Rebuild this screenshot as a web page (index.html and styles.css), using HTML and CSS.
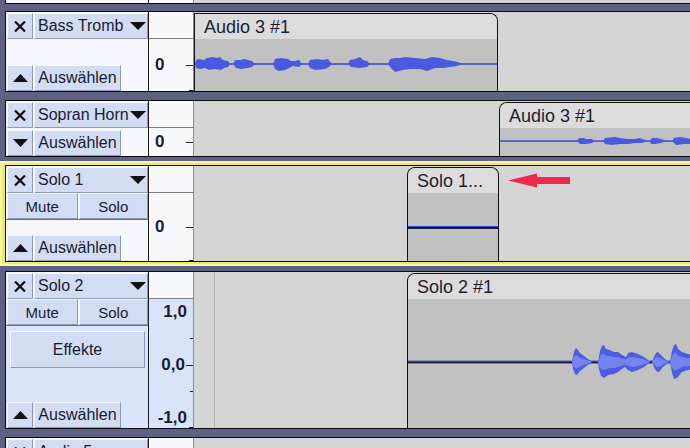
FILE: index.html
```html
<!DOCTYPE html>
<html>
<head>
<meta charset="utf-8">
<link rel="stylesheet" href="styles.css">
</head>
<body>
<div class="tracks">
  <div class="track stub">
    <div class="info"></div>
    <div class="ruler"></div>
    <div class="wave"></div>
  </div>

  <div class="track t1">
    <div class="info">
      <div class="row title-row">
        <div class="btn close"><svg width="12" height="11" viewBox="0 0 12 11"><path d="M1,0.5 L11,10.5 M11,0.5 L1,10.5" stroke="#111" stroke-width="2.2"/></svg></div>
        <div class="btn name"><span class="label">Bass Tromb</span><svg class="drop" width="16" height="8" viewBox="0 0 16 8"><path d="M0,0 L16,0 L8,8 Z" fill="#111"/></svg></div>
      </div>
      <div class="spacer"></div>
      <div class="row bottom-row">
        <div class="btn minimize"><svg width="15" height="8" viewBox="0 0 15 8"><path d="M0,8 L15,8 L7.5,0 Z" fill="#111"/></svg></div>
        <div class="btn select">Auswählen</div>
      </div>
    </div>
    <div class="ruler">
      <div class="corner"></div>
      <div class="scale"><span class="zero">0</span><span class="tick"></span><span class="end-tick"></span></div>
    </div>
    <div class="wave">
      <div class="clip clip-a">
        <div class="clip-head">Audio 3 #1</div>
        <div class="clip-body">
          <svg class="wf" width="302" height="52" viewBox="0 0 302 52">
            <rect x="0" y="24.2" width="302" height="1.6" fill="#3b4bd4"/>
            <g fill="#4a5ae0">
              <path d="M0,25 L1,21 L4,20 L9,21 L12,19 L18,18 L22,19 L25,18 L28,21 L33,22 L35,25 L33,28 L29,29 L26,31 L20,30 L14,31 L10,29 L5,30 L1,29 Z"/>
              <path d="M38,25 L40,21 L46,21 L49,20 L53,21 L57,22 L60,25 L57,28 L52,29 L46,30 L41,29 Z"/>
              <path d="M78,25 L80,20 L86,19 L93,20 L96,22 L100,22 L104,21 L107,25 L104,28 L98,27 L94,29 L90,31 L84,32 L80,30 Z"/>
              <path d="M113,25 L115,21 L122,20 L128,21 L133,20 L137,25 L134,28 L130,30 L120,31 L115,29 Z"/>
              <path d="M153,25 L155,21 L160,20 L165,18 L168,21 L172,22 L175,25 L172,28 L164,29 L156,28 Z"/>
              <path d="M193,25 L195,20 L200,19 L205,19 L210,18 L220,19 L230,20 L237,18 L245,19 L252,21 L258,22 L263,23 L268,25 L262,27 L255,28 L248,29 L240,29 L232,32 L225,30 L215,30 L208,31 L200,33 L196,29 Z"/>
            </g>
          </svg>
        </div>
      </div>
    </div>
  </div>

  <div class="track t2">
    <div class="info">
      <div class="row title-row">
        <div class="btn close"><svg width="12" height="11" viewBox="0 0 12 11"><path d="M1,0.5 L11,10.5 M11,0.5 L1,10.5" stroke="#111" stroke-width="2.2"/></svg></div>
        <div class="btn name"><span class="label">Sopran Horn</span><svg class="drop" width="16" height="8" viewBox="0 0 16 8"><path d="M0,0 L16,0 L8,8 Z" fill="#111"/></svg></div>
      </div>
      <div class="spacer"></div>
      <div class="row bottom-row">
        <div class="btn minimize"><svg width="15" height="8" viewBox="0 0 15 8"><path d="M0,0 L15,0 L7.5,8 Z" fill="#111"/></svg></div>
        <div class="btn select">Auswählen</div>
      </div>
    </div>
    <div class="ruler">
      <div class="corner"></div>
      <div class="scale"><span class="zero">0</span><span class="tick"></span></div>
    </div>
    <div class="wave">
      <div class="clip clip-b">
        <div class="clip-head">Audio 3 #1</div>
        <div class="clip-body">
          <svg class="wf" width="200" height="28" viewBox="0 0 200 28">
            <rect x="0" y="12.3" width="200" height="1.5" fill="#3b4bd4"/>
            <g fill="#4a5ae0">
              <path d="M77,13 L79,10 L84,10 L86,11 L92,11 L95,13 L92,15 L86,16 L80,16 Z"/>
              <path d="M103,13 L105,10 L115,9 L120,10 L128,11 L135,11 L140,10 L148,13 L142,15 L135,15 L128,16 L120,16 L112,17 L105,16 Z"/>
              <path d="M150,13 L152,10 L157,10 L161,11 L167,13 L161,15 L155,16 L151,16 Z"/>
              <path d="M172,13 L174,10 L180,9 L186,10 L192,11 L200,11 L200,16 L192,16 L184,16 L176,17 Z"/>
            </g>
          </svg>
        </div>
      </div>
    </div>
  </div>

  <div class="focus">
    <div class="track t3">
      <div class="info">
        <div class="row title-row">
          <div class="btn close"><svg width="12" height="11" viewBox="0 0 12 11"><path d="M1,0.5 L11,10.5 M11,0.5 L1,10.5" stroke="#111" stroke-width="2.2"/></svg></div>
          <div class="btn name"><span class="label">Solo 1</span><svg class="drop" width="16" height="8" viewBox="0 0 16 8"><path d="M0,0 L16,0 L8,8 Z" fill="#111"/></svg></div>
        </div>
        <div class="row mute-row">
          <div class="btn mute">Mute</div>
          <div class="btn solo">Solo</div>
        </div>
        <div class="spacer"></div>
        <div class="row bottom-row">
          <div class="btn minimize"><svg width="15" height="8" viewBox="0 0 15 8"><path d="M0,8 L15,8 L7.5,0 Z" fill="#111"/></svg></div>
          <div class="btn select">Auswählen</div>
        </div>
      </div>
      <div class="ruler">
        <div class="corner"></div>
        <div class="scale"><span class="zero">0</span><span class="tick"></span><span class="end-tick"></span></div>
      </div>
      <div class="wave">
        <div class="clip clip-c">
          <div class="clip-head">Solo 1...</div>
          <div class="clip-body">
            <div class="flat-line"></div>
          </div>
        </div>
        <svg class="arrow" width="62" height="15" viewBox="0 0 62 15"><path d="M0,7.5 L29,0.5 L29,4 L62,4 L62,11 L29,11 L29,14.5 Z" fill="#f0284c"/></svg>
      </div>
    </div>
  </div>

  <div class="track t4 selected">
    <div class="info">
      <div class="row title-row">
        <div class="btn close"><svg width="12" height="11" viewBox="0 0 12 11"><path d="M1,0.5 L11,10.5 M11,0.5 L1,10.5" stroke="#111" stroke-width="2.2"/></svg></div>
        <div class="btn name"><span class="label">Solo 2</span><svg class="drop" width="16" height="8" viewBox="0 0 16 8"><path d="M0,0 L16,0 L8,8 Z" fill="#111"/></svg></div>
      </div>
      <div class="row mute-row">
        <div class="btn mute">Mute</div>
        <div class="btn solo">Solo</div>
      </div>
      <div class="lower">
        <div class="btn effects">Effekte</div>
        <div class="spacer"></div>
        <div class="row bottom-row">
          <div class="btn minimize"><svg width="15" height="8" viewBox="0 0 15 8"><path d="M0,8 L15,8 L7.5,0 Z" fill="#111"/></svg></div>
          <div class="btn select">Auswählen</div>
        </div>
      </div>
    </div>
    <div class="ruler">
      <div class="corner"></div>
      <div class="scale db">
        <div class="mark top"><span>1,0</span></div>
        <div class="minor"></div>
        <div class="mark mid"><span>0,0</span><span class="tick"></span></div>
        <div class="minor"></div>
        <div class="mark bot"><span>-1,0</span></div>
        <span class="end-tick"></span>
      </div>
    </div>
    <div class="wave">
      <div class="vline"></div>
      <div class="clip clip-d">
        <div class="clip-head">Solo 2 #1</div>
        <div class="clip-body">
          <svg class="wf" width="290" height="129" viewBox="0 0 290 129">
            <rect x="0" y="61.6" width="290" height="1.6" fill="#2f3fd0"/>
            <rect x="0" y="63" width="290" height="1.4" fill="#1a1a28"/>
            <g fill="#4d5de2">
              <path d="M164,63 L166,52 L168,49 L170,51 L172,54 L176,57 L180,60 L184,63 L180,66 L176,69 L172,72 L169,76 L167,75 L165,70 Z"/>
              <path d="M190,63 L192,52 L194,47 L196,46 L198,50 L202,51 L206,53 L210,53 L214,56 L218,58 L220,54 L224,53 L230,55 L236,58 L240,61 L242,63 L240,65 L236,68 L230,71 L224,73 L220,71 L217,68 L214,70 L210,73 L206,75 L200,76 L196,79 L193,77 L191,70 Z"/>
              <path d="M244,63 L246,58 L248,54 L250,53 L253,56 L256,59 L259,62 L262,63 L259,65 L255,68 L251,73 L248,72 L246,68 Z"/>
              <path d="M262,63 L264,52 L266,46 L268,45 L270,50 L274,53 L280,55 L290,56 L290,70 L280,71 L274,73 L269,79 L266,80 L264,74 Z"/>
            </g>
            <g fill="#7584f0" transform="translate(0,63) scale(1,0.5) translate(0,-63)">
              <path d="M164,63 L166,52 L168,49 L170,51 L172,54 L176,57 L180,60 L184,63 L180,66 L176,69 L172,72 L169,76 L167,75 L165,70 Z"/>
              <path d="M190,63 L192,52 L194,47 L196,46 L198,50 L202,51 L206,53 L210,53 L214,56 L218,58 L220,54 L224,53 L230,55 L236,58 L240,61 L242,63 L240,65 L236,68 L230,71 L224,73 L220,71 L217,68 L214,70 L210,73 L206,75 L200,76 L196,79 L193,77 L191,70 Z"/>
              <path d="M244,63 L246,58 L248,54 L250,53 L253,56 L256,59 L259,62 L262,63 L259,65 L255,68 L251,73 L248,72 L246,68 Z"/>
              <path d="M262,63 L264,52 L266,46 L268,45 L270,50 L274,53 L280,55 L290,56 L290,70 L280,71 L274,73 L269,79 L266,80 L264,74 Z"/>
            </g>
          </svg>
        </div>
      </div>
    </div>
  </div>

  <div class="track t5">
    <div class="info">
      <div class="row title-row">
        <div class="btn close"><svg width="12" height="11" viewBox="0 0 12 11"><path d="M1,0.5 L11,10.5 M11,0.5 L1,10.5" stroke="#111" stroke-width="2.2"/></svg></div>
        <div class="btn name"><span class="label">Audio 5</span><svg class="drop" width="16" height="8" viewBox="0 0 16 8"><path d="M0,0 L16,0 L8,8 Z" fill="#111"/></svg></div>
      </div>
    </div>
    <div class="ruler">
      <div class="corner"></div>
    </div>
    <div class="wave"></div>
  </div>
</div>
</body>
</html>
```

FILE: styles.css
```css
* { box-sizing: border-box; }

html, body {
  margin: 0;
  padding: 0;
}

body {
  width: 690px;
  height: 448px;
  overflow: hidden;
  background: #5e6282;
  font-family: "Liberation Sans", Arial, sans-serif;
  color: #1b1b30;
}

.tracks {
  display: flex;
  flex-direction: column;
  width: 690px;
}

.track {
  display: flex;
  margin-left: 5px;
  border: 1px solid #0c0c0c;
  border-right: none;
  background: #f6f8fd;
}

.stub { height: 4px; border-top: none; }
.t1 { height: 81px; margin-top: 7px; }
.t2 { height: 57px; margin-top: 8px; }
.t3 { height: 97px; margin-left: 0; }
.t4 { height: 158px; margin-top: 5px; }
.t5 { height: 40px; margin-top: 8px; }

.focus {
  margin-top: 4px;
  border: 2px solid #f6f6b2;
  border-right: none;
  padding: 2px 0 2px 3px;
  background: #eeee58;
}

/* label panel */
.info {
  width: 143px;
  flex: none;
  display: flex;
  flex-direction: column;
  padding: 1px 0 0 1px;
  border-right: 1px solid #1a1a1a;
  background: #f6f8fd;
}

.row {
  display: flex;
  gap: 1px;
  height: 26px;
  flex: none;
}

.spacer { flex: 1; }

.btn {
  display: flex;
  align-items: center;
  justify-content: center;
  background: #d2ddf3;
  border: 1px solid;
  border-color: #f5f8ff #8e99b6 #8e99b6 #f5f8ff;
  font-size: 16px;
  white-space: nowrap;
  overflow: hidden;
}

.close, .minimize { width: 26px; }

.name {
  width: 114px;
  justify-content: flex-start;
  padding-left: 3px;
  position: relative;
}

.name .label { overflow: hidden; }

.name .drop {
  position: absolute;
  right: 1px;
  top: 8px;
}

.select { width: 87px; }

.mute-row {
  height: 27px;
  border-bottom: 1px solid #6c6e82;
  margin-left: -1px;
  padding-left: 1px;
}

.mute { width: 71px; font-size: 15px; }
.solo { width: 70px; font-size: 15px; }

.lower {
  flex: 1;
  display: flex;
  flex-direction: column;
  margin-left: -1px;
  padding-left: 1px;
  background: #dae4fa;
}

.effects {
  margin: 5px 0 0 3px;
  width: 135px;
  height: 37px;
  flex: none;
}

/* vertical ruler */
.ruler {
  width: 45px;
  flex: none;
  display: flex;
  flex-direction: column;
  border-right: 1px solid #8a8a8a;
  background: #f8f9fd;
}

.corner {
  height: 27px;
  flex: none;
  border-bottom: 1px solid #7d7d86;
}

.stub .corner { display: none; }

.scale {
  flex: 1;
  position: relative;
  display: flex;
  align-items: center;
  padding-left: 6px;
  font-size: 17px;
  font-weight: bold;
}

.scale .zero { flex: 1; }

.tick {
  width: 7px;
  height: 1px;
  background: #222;
  margin-right: 0;
}

.end-tick {
  position: absolute;
  right: 0;
  bottom: 0;
  width: 4px;
  height: 1px;
  background: #222;
}

.scale.db {
  flex-direction: column;
  align-items: stretch;
  justify-content: space-between;
  padding: 5px 0 2px 0;
  background: #d9e3f9;
  font-size: 17px;
}

.mark {
  display: flex;
  align-items: center;
  justify-content: flex-end;
  padding-right: 6px;
  height: 16px;
}

.mark.mid { padding-right: 0; }
.mark.mid span:first-child { margin-right: 1px; }

.minor {
  align-self: flex-end;
  width: 3px;
  height: 1px;
  background: #222;
}

/* wave canvas */
.wave {
  flex: 1;
  position: relative;
  overflow: hidden;
  background: #d5d5d5;
}

.clip {
  position: absolute;
  top: 1px;
  bottom: 0;
  display: flex;
  flex-direction: column;
  border: 1px solid #111;
  border-bottom: none;
  background: #c1c1c1;
  overflow: hidden;
}

.clip-head {
  height: 25px;
  flex: none;
  padding-left: 9px;
  line-height: 26px;
  font-size: 18px;
  color: #1c1c2e;
  background: #dcdcdc;
  white-space: nowrap;
}

.clip-body {
  flex: 1;
  position: relative;
}

.wf { display: block; }

.clip-a { left: 0; width: 304px; border-top-right-radius: 8px; }
.clip-b { left: 305px; width: 220px; border-top-left-radius: 8px; }
.clip-c { left: 213px; width: 92px; border-top-left-radius: 8px; border-top-right-radius: 8px; }
.clip-d { left: 213px; width: 300px; border-top-left-radius: 8px; }

.flat-line {
  margin-top: 33px;
  height: 3px;
  border-top: 1px solid #2f3fd0;
  background: #1a1a28;
}

.arrow {
  position: absolute;
  left: 314px;
  top: 7px;
}

.vline {
  position: absolute;
  left: 20px;
  top: 0;
  bottom: 0;
  width: 1px;
  background: #b4b4b4;
}
```
